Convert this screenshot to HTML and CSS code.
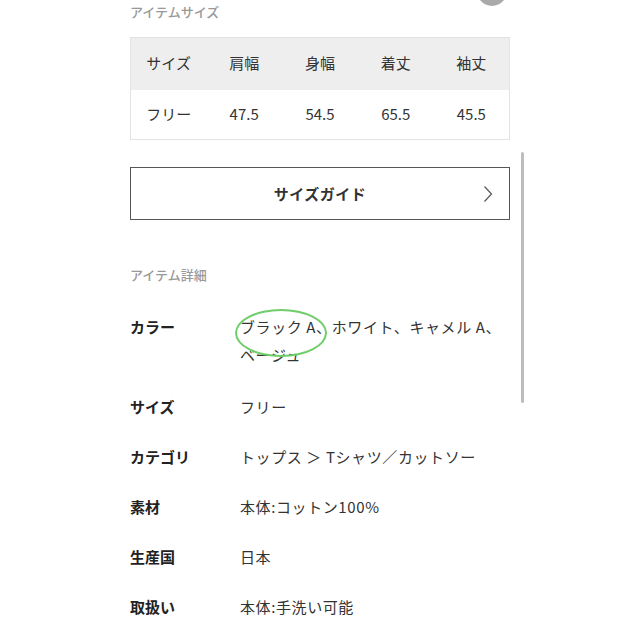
FILE: index.html
```html
<!DOCTYPE html>
<html lang="ja">
<head>
<meta charset="utf-8">
<link rel="stylesheet" href="styles.css">
</head>
<body>
<div class="fab"></div>
<div class="scrollbar"></div>
<main class="page">
  <h2 class="section-title">アイテムサイズ</h2>
  <table class="size-table">
    <thead>
      <tr><th>サイズ</th><th>肩幅</th><th>身幅</th><th>着丈</th><th>袖丈</th></tr>
    </thead>
    <tbody>
      <tr><td>フリー</td><td>47.5</td><td>54.5</td><td>65.5</td><td>45.5</td></tr>
    </tbody>
  </table>
  <a class="guide-btn">
    <span class="guide-label">サイズガイド</span>
    <svg class="chevron" width="10" height="18" viewBox="0 0 10 18"><path d="M1.5 1.5 L8.5 9 L1.5 16.5" fill="none" stroke="#555" stroke-width="1.2"/></svg>
  </a>
  <h2 class="section-title detail-title">アイテム詳細</h2>
  <dl class="details">
    <div class="row row-color"><dt>カラー</dt><dd><span class="circled">ブラック A、</span>ホワイト、キャメル A、ベージュ</dd></div>
    <div class="row"><dt>サイズ</dt><dd>フリー</dd></div>
    <div class="row"><dt>カテゴリ</dt><dd>トップス ＞ Tシャツ／カットソー</dd></div>
    <div class="row"><dt>素材</dt><dd>本体:コットン100%</dd></div>
    <div class="row"><dt>生産国</dt><dd>日本</dd></div>
    <div class="row"><dt>取扱い</dt><dd>本体:手洗い可能</dd></div>
  </dl>
</main>
</body>
</html>
```
FILE: styles.css
```css
* { box-sizing: border-box; }
html, body {
  margin: 0;
  padding: 0;
  background: #fff;
  font-family: "Noto Sans CJK JP", "Noto Sans", sans-serif;
  color: #333;
}
body { position: relative; width: 640px; height: 640px; overflow: hidden; }

.fab {
  position: absolute;
  left: 477px;
  top: -24px;
  width: 30px;
  height: 30px;
  border-radius: 50%;
  background: #aaa;
}
.scrollbar {
  position: absolute;
  left: 521px;
  top: 152px;
  width: 3px;
  height: 251px;
  border-radius: 2px;
  background: #bdbdbd;
}

.page {
  width: 380px;
  margin-left: 130px;
  padding-top: 2px;
  display: flex;
  flex-direction: column;
}

.section-title {
  margin: 0;
  font-size: 13px;
  line-height: 20px;
  font-weight: 500;
  color: #999;
}

.size-table {
  margin-top: 15px;
  width: 380px;
  border-collapse: collapse;
  table-layout: fixed;
  border: 1px solid #e3e3e3;
}
.size-table th, .size-table td {
  text-align: center;
  font-size: 15px;
  font-weight: 400;
  color: #333;
  padding: 0;
}
.size-table th {
  background: #eeeeee;
  height: 52px;
  padding-bottom: 3px;
}
.size-table td {
  height: 50px;
  background: #fff;
  padding-bottom: 1px;
}

.guide-btn {
  margin-top: 27px;
  height: 53px;
  border: 1px solid #555;
  display: flex;
  align-items: center;
  justify-content: center;
  position: relative;
}
.guide-label {
  font-size: 15px;
  font-weight: 700;
  color: #333;
  letter-spacing: 0.5px;
}
.chevron {
  position: absolute;
  right: 16px;
  top: 17px;
}

.detail-title { margin-top: 45px; }

.details {
  margin: 28px 0 0;
  display: flex;
  flex-direction: column;
  gap: 22px;
}
.row {
  display: grid;
  grid-template-columns: 110px 1fr;
  font-size: 15px;
  line-height: 28px;
}
.row-color { margin-bottom: 2px; }
.row dt {
  font-weight: 700;
  color: #222;
}
.row dd {
  margin: 0;
  color: #333;
  letter-spacing: 0.6px;
}
.circled {
  position: relative;
}
.circled::after {
  content: "";
  position: absolute;
  left: -5px;
  top: -7px;
  width: 88px;
  height: 44px;
  border: 2px solid #6fce6a;
  border-radius: 50%;
}
```
